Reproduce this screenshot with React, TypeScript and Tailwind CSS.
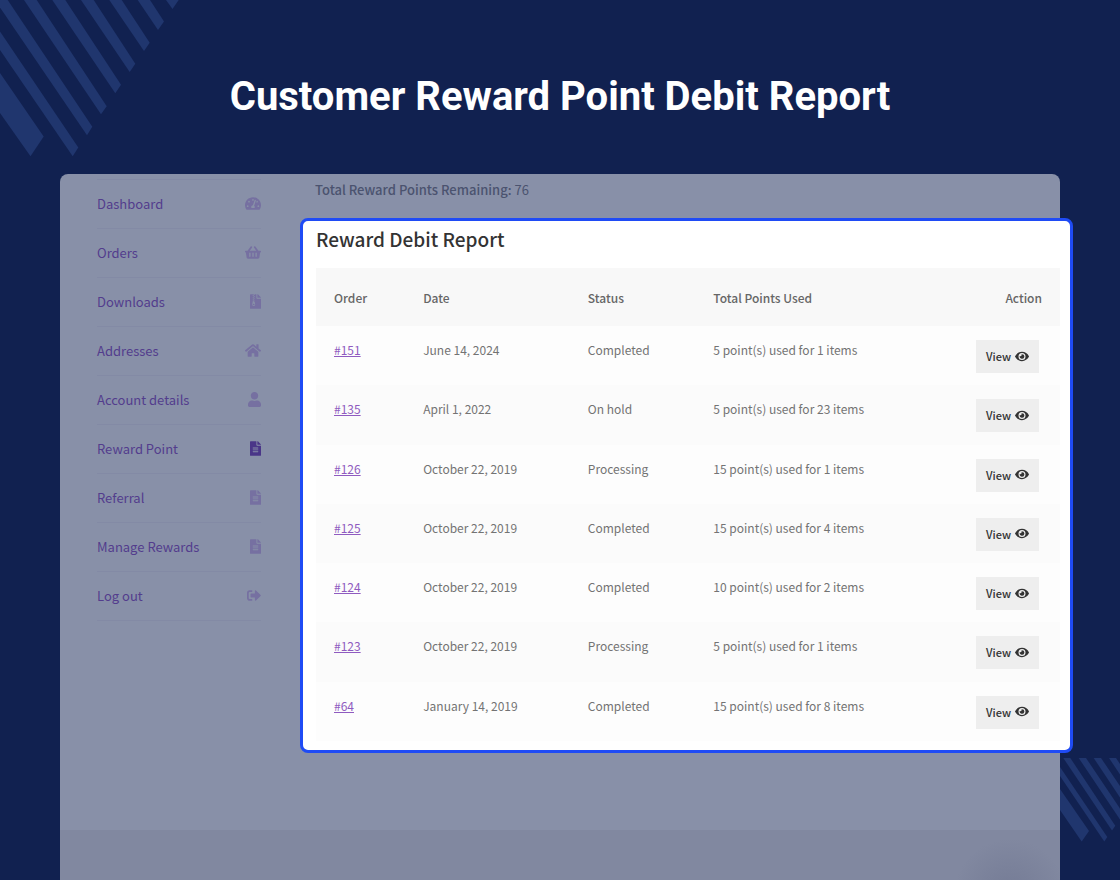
import type { IconType } from "react-icons";
import {
	FaEye,
	FaFileAlt,
	FaFileArchive,
	FaHome,
	FaShoppingBasket,
	FaSignOutAlt,
	FaTachometerAlt,
	FaUser,
} from "react-icons/fa";

type NavItem = {
	label: string;
	icon: IconType;
	iconWidth: string;
	active?: boolean;
};

const NAV_ITEMS: NavItem[] = [
	{ label: "Dashboard", icon: FaTachometerAlt, iconWidth: "w-4" },
	{ label: "Orders", icon: FaShoppingBasket, iconWidth: "w-4" },
	{ label: "Downloads", icon: FaFileArchive, iconWidth: "w-[11px]" },
	{ label: "Addresses", icon: FaHome, iconWidth: "w-4" },
	{ label: "Account details", icon: FaUser, iconWidth: "w-[13px]" },
	{ label: "Reward Point", icon: FaFileAlt, iconWidth: "w-[11px]", active: true },
	{ label: "Referral", icon: FaFileAlt, iconWidth: "w-[11px]" },
	{ label: "Manage Rewards", icon: FaFileAlt, iconWidth: "w-[11px]" },
	{ label: "Log out", icon: FaSignOutAlt, iconWidth: "w-[14px]" },
];

type DebitRow = {
	order: string;
	date: string;
	status: string;
	used: string;
};

const DEBIT_ROWS: DebitRow[] = [
	{ order: "#151", date: "June 14, 2024", status: "Completed", used: "5 point(s) used for 1 items" },
	{ order: "#135", date: "April 1, 2022", status: "On hold", used: "5 point(s) used for 23 items" },
	{ order: "#126", date: "October 22, 2019", status: "Processing", used: "15 point(s) used for 1 items" },
	{ order: "#125", date: "October 22, 2019", status: "Completed", used: "15 point(s) used for 4 items" },
	{ order: "#124", date: "October 22, 2019", status: "Completed", used: "10 point(s) used for 2 items" },
	{ order: "#123", date: "October 22, 2019", status: "Processing", used: "5 point(s) used for 1 items" },
	{ order: "#64", date: "January 14, 2019", status: "Completed", used: "15 point(s) used for 8 items" },
];

export default function App() {
	return (
		<div className="relative flex min-h-screen flex-col overflow-hidden bg-[#112150] font-['Noto_Sans_CJK_SC','Noto_Sans',sans-serif]">
			<StripesTop />
			<StripesBottom />

			<header className="relative px-4 pt-[73px] pb-[53px] text-center">
				<h1 className="font-[Roboto,sans-serif] text-[40px] leading-12 font-bold text-white">
					Customer Reward Point Debit Report
				</h1>
			</header>

			<div className="relative mx-[60px] flex flex-1 flex-col rounded-t-lg bg-[#8890a8]">
				<div className="flex flex-1 pb-[77px]">
					<AccountNav />
					<main className="min-w-0 flex-1">
						<p className="pt-[6px] pb-[18px] pl-[15px] text-[13px] leading-5 text-[#4b536f]">
							<strong className="font-medium">Total Reward Points Remaining:</strong> 76
						</p>
						<DebitReport />
					</main>
				</div>
				<footer className="h-[50px] bg-[#8188a0] bg-[radial-gradient(circle_at_95%_130%,#747b95_0,#8188a0_56px)]" />
			</div>
		</div>
	);
}

function AccountNav() {
	return (
		<nav aria-label="Account" className="w-[240px] shrink-0 pt-[5px] pr-[39px] pl-[37px]">
			<ul className="border-t border-[#838aa5]">
				{NAV_ITEMS.map(({ label, icon: Icon, iconWidth, active }) => (
					<li key={label} className="border-b border-[#838aa5]">
						<a
							href="#"
							className="flex h-12 items-center justify-between pb-px text-[13px] text-[#533d8d]"
						>
							{label}
							<Icon
								aria-hidden="true"
								className={`h-[15px] ${iconWidth} ${active ? "text-[#4a3688]" : "text-[#7670a1]"}`}
							/>
						</a>
					</li>
				))}
			</ul>
		</nav>
	);
}

function DebitReport() {
	return (
		<section className="-mr-[13px] rounded-lg border-3 border-[#1f4bf5] bg-white pr-[10px] pb-[9px] pl-[13px]">
			<h2 className="pt-1 pb-[15px] text-[19px] leading-7 font-medium text-[#333]">
				Reward Debit Report
			</h2>
			<table className="h-[473px] w-full table-fixed text-left text-[12px] leading-5 text-[#737373]">
				<colgroup>
					<col className="w-[14%]" />
					<col className="w-[22%]" />
					<col className="w-[17%]" />
					<col className="w-[31%]" />
					<col className="w-[16%]" />
				</colgroup>
				<thead className="bg-[#f8f8f8] text-[#666]">
					<tr className="h-[58px]">
						<th className="pt-0.5 pl-[18px] font-medium">Order</th>
						<th className="pt-0.5 pl-[3px] font-medium">Date</th>
						<th className="pt-0.5 pl-1 font-medium">Status</th>
						<th className="pt-0.5 pl-[3px] font-medium">Total Points Used</th>
						<th className="pt-0.5 pr-[18px] text-right font-medium">Action</th>
					</tr>
				</thead>
				<tbody>
					{DEBIT_ROWS.map((row) => (
						<tr key={row.order} className="bg-[#fdfdfd] align-top even:bg-[#fbfbfb]">
							<td className="pt-[14px] pl-[18px]">
								<a href="#" className="text-[#8f5bc0] underline">
									{row.order}
								</a>
							</td>
							<td className="pt-[14px] pl-[3px]">{row.date}</td>
							<td className="pt-[14px] pl-1">{row.status}</td>
							<td className="pt-[14px] pl-[3px]">{row.used}</td>
							<td className="pt-[14px] pr-[21px] pb-3">
								<button
									type="button"
									className="ml-auto flex h-[33px] w-[63px] items-center justify-center gap-1 bg-[#eee] pb-px text-[11px] font-medium text-[#333]"
								>
									View
									<FaEye aria-hidden="true" className="h-[13px] w-[14px]" />
								</button>
							</td>
						</tr>
					))}
				</tbody>
			</table>
		</section>
	);
}

function StripesTop() {
	return (
		<svg
			aria-hidden="true"
			viewBox="0 0 180 158"
			className="absolute top-0 left-0 h-[158px] w-[180px] fill-[#20366e]"
		>
			<path d="M0 73L43.7 136.5L30.5 156.3L0 113Z" />
			<path d="M0 31.5L78.3 147.5L72.7 156.3L0 50Z" />
			<path d="M0 0H7.7L92.3 126.7L87 135.3L0 7.5Z" />
			<path d="M24 0H36.7L106.7 106.3L101 114.3Z" />
			<path d="M52.3 0H65.3L121 84.7L115.3 93.3Z" />
			<path d="M81 0H93.7L135.3 63.7L129.7 72Z" />
			<path d="M109.3 0H121.7L149.7 42.7L144 51Z" />
			<path d="M137.7 0H150L164 21.5L158 30Z" />
			<path d="M166 0H178.7L172.5 9Z" />
		</svg>
	);
}

function StripesBottom() {
	return (
		<svg
			aria-hidden="true"
			viewBox="0 0 60 84"
			className="absolute right-0 bottom-[38px] h-[84px] w-[60px] fill-[#20366e]"
		>
			<path d="M0 31L29 73L21.7 83.5L0 52Z" />
			<path d="M0 9L47.3 79L44.3 83.5L0 18Z" />
			<path d="M3.3 0H10.3L55.3 67.7L52 72.5Z" />
			<path d="M18.7 0H26L60 50.5V61.5Z" />
			<path d="M33.7 0H41L60 28V39.5Z" />
			<path d="M49 0H56L60 6V16.5Z" />
		</svg>
	);
}
